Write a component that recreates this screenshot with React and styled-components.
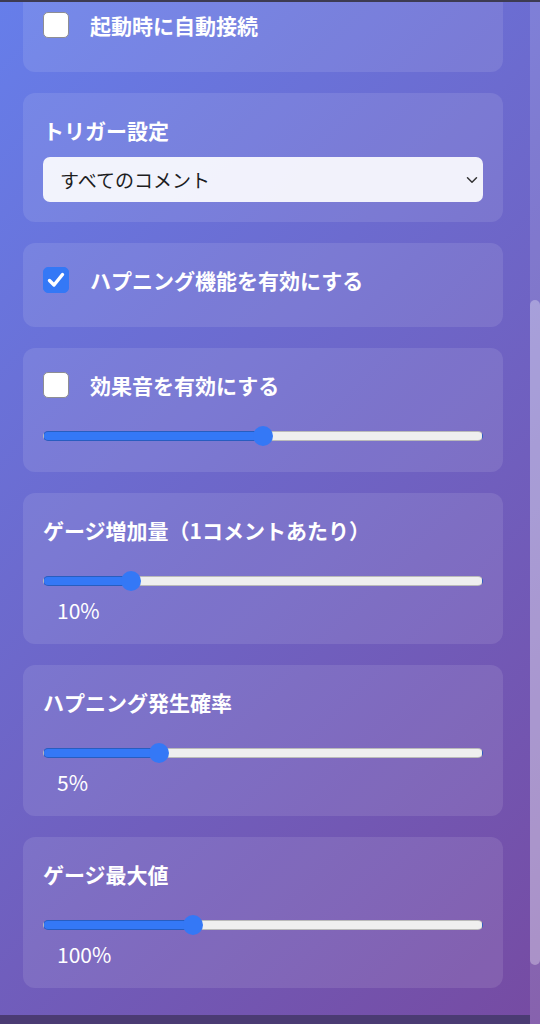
import React, { useLayoutEffect, useRef, useState } from "react";
import styled, { createGlobalStyle } from "styled-components";

const GlobalStyle = createGlobalStyle`
  html, body {
    margin: 0;
    padding: 0;
  }
  body {
    font-family: "Noto Sans CJK JP", "Noto Sans", sans-serif;
    background: #4b3b73;
  }
  * {
    box-sizing: border-box;
  }
`;

const Frame = styled.div`
  height: 1024px;
  display: flex;
  flex-direction: column;
  overflow: hidden;
  background: linear-gradient(135deg, #667eea 0%, #764ba2 100%);
`;

const TopEdge = styled.div`
  height: 2px;
  flex-shrink: 0;
  background: #3d3b52;
`;

const Body = styled.div`
  flex: 1;
  min-height: 0;
  display: flex;
`;

const Main = styled.div`
  flex: 1;
  min-width: 0;
  display: flex;
  flex-direction: column;
`;

const Scroller = styled.div`
  position: relative;
  flex: 1;
  min-height: 0;
  overflow: hidden;
`;

const Track = styled.div`
  width: 10px;
  flex-shrink: 0;
  background: rgba(255, 255, 255, 0.13);
`;

const Thumb = styled.div`
  width: 10px;
  border-radius: 5px;
  background: rgba(255, 255, 255, 0.3);
`;

const Content = styled.div`
  display: flex;
  flex-direction: column;
  gap: 21px;
  padding: 20px 27px 117px 23px;
`;

const Footer = styled.div`
  height: 9px;
  flex-shrink: 0;
  background: #4b3b73;
`;

const Header = styled.header`
  color: #fff;
`;

const Title = styled.h1`
  margin: 0 0 20px;
  font-size: 28px;
  line-height: 40px;
  font-weight: 700;
`;

const Subtitle = styled.p`
  margin: 0;
  font-size: 16px;
  line-height: 26px;
  opacity: 0.85;
`;

const Card = styled.section`
  display: flex;
  flex-direction: column;
  background: rgba(255, 255, 255, 0.1);
  border-radius: 12px;
  padding: 20px;
`;

const Label = styled.label`
  display: flex;
  align-items: center;
  gap: 21px;
  margin: ${(p) => (p.$spaced ? "14px" : "0")} 0 10px;
  font-size: 21px;
  line-height: 34px;
  font-weight: 700;
  color: #fff;
  cursor: pointer;
  user-select: none;
`;

const Box = styled.span`
  width: 26px;
  height: 26px;
  flex-shrink: 0;
  display: flex;
  align-items: center;
  justify-content: center;
  border-radius: 5px;
  background: ${(p) => (p.$checked ? "#3478f6" : "#fff")};
  border: 1px solid ${(p) => (p.$checked ? "#3478f6" : "#8e8e93")};
`;

const fieldStyle = `
  display: block;
  width: 100%;
  height: 45px;
  border: none;
  border-radius: 7px;
  background: rgba(255, 255, 255, 0.9);
  font-family: inherit;
  font-size: 19px;
  color: #1d1d1f;
`;

const Field = styled.input`
  ${fieldStyle}
  padding: 0 17px;
`;

const Button = styled.button`
  ${fieldStyle}
  margin-top: 14px;
  font-weight: 700;
  color: #5a4a9c;
`;

const SelectWrap = styled.div`
  position: relative;
`;

const Select = styled.select`
  ${fieldStyle}
  appearance: none;
  -webkit-appearance: none;
  padding: 0 36px 0 17px;
`;

const Chevron = styled.svg`
  position: absolute;
  right: 5px;
  top: 50%;
  margin-top: -4px;
  pointer-events: none;
`;

const Status = styled.div`
  display: flex;
  align-items: center;
  gap: 10px;
  height: 45px;
  font-size: 19px;
  color: #fff;
`;

const Dot = styled.span`
  width: 12px;
  height: 12px;
  border-radius: 50%;
  background: ${(p) => (p.$on ? "#4cd964" : "#ff6b6b")};
`;

const Range = styled.input.attrs({ type: "range" })`
  -webkit-appearance: none;
  appearance: none;
  display: block;
  width: 100%;
  height: 10px;
  margin: 19px 0 11px;
  border-radius: 5px;
  border: 1px solid rgba(0, 0, 0, 0.22);
  background: ${(p) =>
    `linear-gradient(to right, #3478f6 0, #3478f6 calc(10px + ${p.$ratio} * (100% - 20px)), #efefef calc(10px + ${p.$ratio} * (100% - 20px)), #efefef 100%)`};
  outline: none;
  cursor: pointer;

  &::-webkit-slider-thumb {
    -webkit-appearance: none;
    appearance: none;
    width: 20px;
    height: 20px;
    border-radius: 50%;
    border: none;
    background: #3478f6;
  }
`;

const Value = styled.div`
  padding-left: 14px;
  font-size: 21px;
  line-height: 27px;
  color: #fff;
`;

function Check({ checked, onToggle, children, spaced }) {
  return (
    <Label $spaced={spaced} onClick={onToggle}>
      <Box $checked={checked}>
        {checked && (
          <svg width="22" height="22" viewBox="0 0 22 22">
            <path
              d="M4.5 11.5 L9 16 L17.5 5.5"
              fill="none"
              stroke="#fff"
              strokeWidth="3.4"
              strokeLinecap="round"
              strokeLinejoin="round"
            />
          </svg>
        )}
      </Box>
      {children}
    </Label>
  );
}

function Slider({ min, max, value, onChange, suffix, showValue = true }) {
  const ratio = (value - min) / (max - min);
  return (
    <>
      <Range
        min={min}
        max={max}
        value={value}
        $ratio={ratio}
        onChange={(e) => onChange(Number(e.target.value))}
      />
      {showValue && (
        <Value>
          {value}
          {suffix}
        </Value>
      )}
    </>
  );
}

export default function App() {
  const scrollerRef = useRef(null);
  const triggerRef = useRef(null);
  const trackRef = useRef(null);

  const [thumb, setThumb] = useState({ top: 298, height: 665 });
  const [autoConnect, setAutoConnect] = useState(false);
  const [trigger, setTrigger] = useState("all");
  const [happening, setHappening] = useState(true);
  const [sound, setSound] = useState(false);
  const [volume, setVolume] = useState(50);
  const [gaugeStep, setGaugeStep] = useState(10);
  const [chance, setChance] = useState(5);
  const [gaugeMax, setGaugeMax] = useState(100);

  useLayoutEffect(() => {
    const el = scrollerRef.current;
    if (!el || !triggerRef.current) return;
    // トリガー設定カードが上から少し下に来る位置までスクロール
    el.scrollTop = triggerRef.current.offsetTop - 91;
    const trackH = trackRef.current.clientHeight;
    setThumb({
      top: (el.scrollTop / el.scrollHeight) * trackH,
      height: (el.clientHeight / el.scrollHeight) * trackH,
    });
  }, []);

  return (
    <>
      <GlobalStyle />
      <Frame>
        <TopEdge />
        <Body>
          <Main>
            <Scroller ref={scrollerRef}>
              <Content>
                <Header>
                  <Title>コメントハプニング</Title>
                  <Subtitle>配信を盛り上げるハプニング設定</Subtitle>
                </Header>

                <Card>
                  <Label>接続状態</Label>
                  <Status>
                    <Dot />
                    未接続
                  </Status>
                </Card>

                <Card>
                  <Label>配信URL</Label>
                  <Field placeholder="https://" />
                  <Button>接続</Button>
                  <Check
                    spaced
                    checked={autoConnect}
                    onToggle={() => setAutoConnect(!autoConnect)}
                  >
                    起動時に自動接続
                  </Check>
                </Card>

                <Card ref={triggerRef}>
                  <Label>トリガー設定</Label>
                  <SelectWrap>
                    <Select value={trigger} onChange={(e) => setTrigger(e.target.value)}>
                      <option value="all">すべてのコメント</option>
                      <option value="gift">ギフトのみ</option>
                      <option value="keyword">キーワード指定</option>
                    </Select>
                    <Chevron width="12" height="8" viewBox="0 0 12 8">
                      <path
                        d="M1.5 1.8 L6 6.2 L10.5 1.8"
                        fill="none"
                        stroke="#333"
                        strokeWidth="1.5"
                        strokeLinecap="round"
                        strokeLinejoin="round"
                      />
                    </Chevron>
                  </SelectWrap>
                </Card>

                <Card>
                  <Check checked={happening} onToggle={() => setHappening(!happening)}>
                    ハプニング機能を有効にする
                  </Check>
                </Card>

                <Card>
                  <Check checked={sound} onToggle={() => setSound(!sound)}>
                    効果音を有効にする
                  </Check>
                  <Slider min={0} max={100} value={volume} onChange={setVolume} showValue={false} />
                </Card>

                <Card>
                  <Label>ゲージ増加量（1コメントあたり）</Label>
                  <Slider min={1} max={50} value={gaugeStep} onChange={setGaugeStep} suffix="%" />
                </Card>

                <Card>
                  <Label>ハプニング発生確率</Label>
                  <Slider min={0} max={20} value={chance} onChange={setChance} suffix="%" />
                </Card>

                <Card>
                  <Label>ゲージ最大値</Label>
                  <Slider min={50} max={200} value={gaugeMax} onChange={setGaugeMax} suffix="%" />
                </Card>
              </Content>
            </Scroller>
            <Footer />
          </Main>
          <Track ref={trackRef}>
            <Thumb style={{ marginTop: thumb.top, height: thumb.height }} />
          </Track>
        </Body>
      </Frame>
    </>
  );
}
